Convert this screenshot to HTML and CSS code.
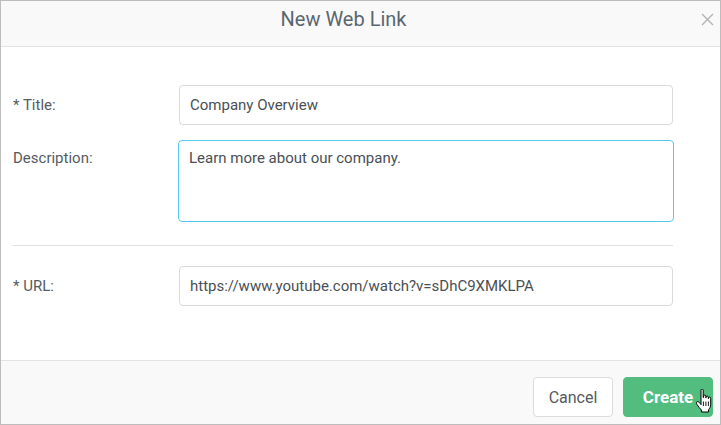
FILE: index.html
```html
<!DOCTYPE html>
<html>
<head>
<meta charset="utf-8">
<link rel="stylesheet" href="styles.css">
</head>
<body>
<div class="dialog">
  <div class="header">
    <h1 class="title">New Web Link</h1>
    <span class="close">
      <svg width="13" height="13" viewBox="0 0 13 13"><path d="M1 1 L12 12 M12 1 L1 12" stroke="#b3b3b3" stroke-width="1.4" fill="none"/></svg>
    </span>
  </div>
  <div class="body">
    <div class="row">
      <label class="label">* Title:</label>
      <div class="input">Company Overview</div>
    </div>
    <div class="row row-desc">
      <label class="label">Description:</label>
      <div class="input textarea">Learn more about our company.</div>
    </div>
    <div class="sep"></div>
    <div class="row">
      <label class="label">* URL:</label>
      <div class="input">https://www.youtube.com/watch?v=sDhC9XMKLPA</div>
    </div>
  </div>
  <div class="footer">
    <button class="btn btn-cancel">Cancel</button>
    <button class="btn btn-create">Create
      <svg class="cursor" width="17" height="24" viewBox="0 0 17 24"><path d="M6 1.2C6 .5 6.5 0 7.1 0S8.2.5 8.2 1.2V8.5H8.6V7.2C8.6 6.5 9.1 6 9.7 6S10.8 6.5 10.8 7.2V8.8H11.1V8.1C11.1 7.5 11.6 7 12.2 7S13.3 7.5 13.3 8.1V9.6H13.5V9.2C13.5 8.6 14 8.1 14.6 8.1S15.7 8.6 15.7 9.2V15.3C15.7 18 14.5 19.6 13.6 20.6V23H6.4V21C5.4 20 3.4 17.6 1.8 15.2C1.2 14.2 1.2 13.2 2.1 12.8C3 12.4 4.1 13 5 14.3L6 15.6Z" fill="#fff" stroke="#000" stroke-width="1" stroke-linejoin="round"/><path d="M8.4 17V12.5M10.9 17V12.5M13.4 17V12.5" stroke="#000" stroke-width="0.9"/></svg>
    </button>
  </div>
</div>
</body>
</html>
```

FILE: styles.css
```css
* { box-sizing: border-box; }
html, body { margin: 0; padding: 0; }
body {
  width: 721px;
  height: 425px;
  background: #fff;
  font-family: Roboto, "Noto Sans", sans-serif;
  overflow: hidden;
}
.dialog {
  width: 721px;
  height: 425px;
  border: 1px solid #bdbdbd;
  display: flex;
  flex-direction: column;
  background: #fff;
}
.header {
  height: 46px;
  flex: none;
  background: #f9f9f9;
  border-bottom: 1px solid #e3e3e3;
  display: flex;
  align-items: flex-start;
  justify-content: center;
  padding: 6px 34px 0 0;
  position: relative;
}
.title {
  margin: 0;
  font-size: 20px;
  line-height: 24px;
  font-weight: 400;
  color: #5b6670;
}
.close {
  position: absolute;
  right: 6px;
  top: 12px;
  line-height: 0;
}
.body {
  flex: 1;
  padding: 38px 47px 0 12px;
}
.row {
  display: grid;
  grid-template-columns: 166px 1fr;
  align-items: center;
  margin-bottom: 15px;
}
.row-desc {
  align-items: start;
  margin-bottom: 23px;
}
.row-desc .label { padding-top: 9px; }
.label {
  font-size: 15px;
  color: #555b61;
}
.input {
  height: 40px;
  border: 1px solid #dadada;
  border-radius: 4px;
  padding: 0 10px;
  display: flex;
  align-items: center;
  font-size: 15px;
  color: #4a4f55;
}
.textarea {
  height: 82px;
  align-items: flex-start;
  padding-top: 8px;
  margin-left: -1px;
  margin-right: -1px;
  border-color: #58c8ef;
}
.sep {
  height: 1px;
  background: #e0e0e0;
  margin-bottom: 20px;
}
.footer {
  height: 64px;
  flex: none;
  background: #f9f9f9;
  border-top: 1px solid #e3e3e3;
  display: flex;
  justify-content: flex-end;
  align-items: flex-start;
  gap: 10px;
  padding: 16px 7px 0 0;
}
.btn {
  height: 40px;
  border-radius: 4px;
  font-family: Roboto, "Noto Sans", sans-serif;
  font-size: 16px;
  padding: 0;
}
.btn-cancel {
  width: 80px;
  background: #fff;
  border: 1px solid #dcdcdc;
  color: #555b61;
}
.btn-create {
  width: 90px;
  background: #52bd7e;
  border: 1px solid #52bd7e;
  color: #fff;
  font-size: 17px;
  font-weight: 700;
  position: relative;
}
.cursor {
  position: absolute;
  left: 71px;
  top: 11px;
}
```
